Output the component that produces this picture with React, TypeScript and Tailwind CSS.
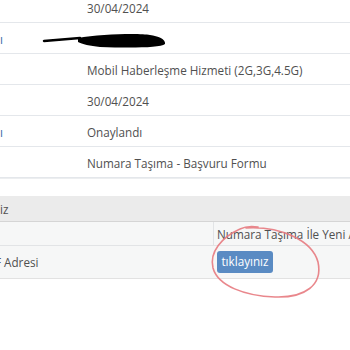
import React from "react";

const rows: { label: string; value: string }[] = [
  { label: "", value: "30/04/2024" },
  { label: "ı", value: "" },
  { label: "", value: "Mobil Haberleşme Hizmeti (2G,3G,4.5G)" },
  { label: "", value: "30/04/2024" },
  { label: "ı", value: "Onaylandı" },
  { label: "", value: "Numara Taşıma - Başvuru Formu" },
];

export default function App() {
  return (
    <div
      className="relative w-[350px] h-[350px] overflow-hidden bg-white text-[#505050] text-[11.7px]"
      style={{ fontFamily: '"Open Sans", "Noto Sans", sans-serif' }}
    >
      <div className="relative">
        <div className="absolute left-0 right-0 top-0 h-[3px] bg-gradient-to-b from-[#d6d6d6] to-transparent z-10" />
        {rows.map((r, i) => (
          <div
            key={i}
            className={`flex items-center h-[31px] border-b border-[#e4e7eb] pt-[4px] ${i === 0 ? "-mt-[8px]" : ""}`}
          >
            <div className="w-[87px] shrink-0 text-[#3c6ea8] pl-0">{r.label}</div>
            <div className="whitespace-nowrap">{r.value}</div>
          </div>
        ))}
        <div className="h-[1px] bg-[#eceef0]" />
      </div>

      <div className="h-[17px]" />

      <div className="h-[26px] bg-[#ebebeb] border-b border-[#d5d5d5] shadow-[0_1px_1px_rgba(0,0,0,0.06)] flex items-center pt-[2px]">
        <span>iz</span>
      </div>

      <div className="bg-[#f6f7f7] border-b border-[#e2e2e2]">
        <div className="grid grid-cols-[214px_1fr] h-[24px] border-b border-[#e2e4e6]">
          <div className="border-r border-[#e2e4e6]" />
          <div className="pl-[3px] flex items-center pt-[2px] whitespace-nowrap overflow-hidden">
            Numara Taşıma İle Yeni Abone Başvurusu
          </div>
        </div>
        <div className="grid grid-cols-[214px_1fr] h-[32px]">
          <div className="flex items-center pt-[2px] overflow-hidden">
            <span className="-ml-[5px] whitespace-nowrap">F Adresi</span>
          </div>
          <div className="pl-[3px] flex items-center">
            <button className="h-[22px] w-[56px] rounded-[3px] bg-[#5a8bc3] text-white text-[11.7px] flex items-center justify-center">
              tıklayınız
            </button>
          </div>
        </div>
      </div>

      <svg className="absolute inset-0 pointer-events-none" width="350" height="350" viewBox="0 0 350 350">
        <path
          d="M44 41 L80 38"
          stroke="#000"
          strokeWidth="2.5"
          strokeLinecap="round"
          fill="none"
        />
        <path
          d="M78 38 C100 34 140 33 150 35 C158 36 166 39 165 44 C160 48 130 48 100 47 C90 46 82 44 78 42 Z"
          fill="#000"
        />
        <path
          d="M246 228 C280 226 312 240 318 262 C323 285 305 298 275 297 C245 296 218 286 213 268 C209 252 222 237 240 229 C246 226 252 226 258 227"
          stroke="#e77a7f"
          strokeWidth="1.6"
          fill="none"
          strokeLinecap="round"
          opacity="0.9"
        />
      </svg>
    </div>
  );
}
